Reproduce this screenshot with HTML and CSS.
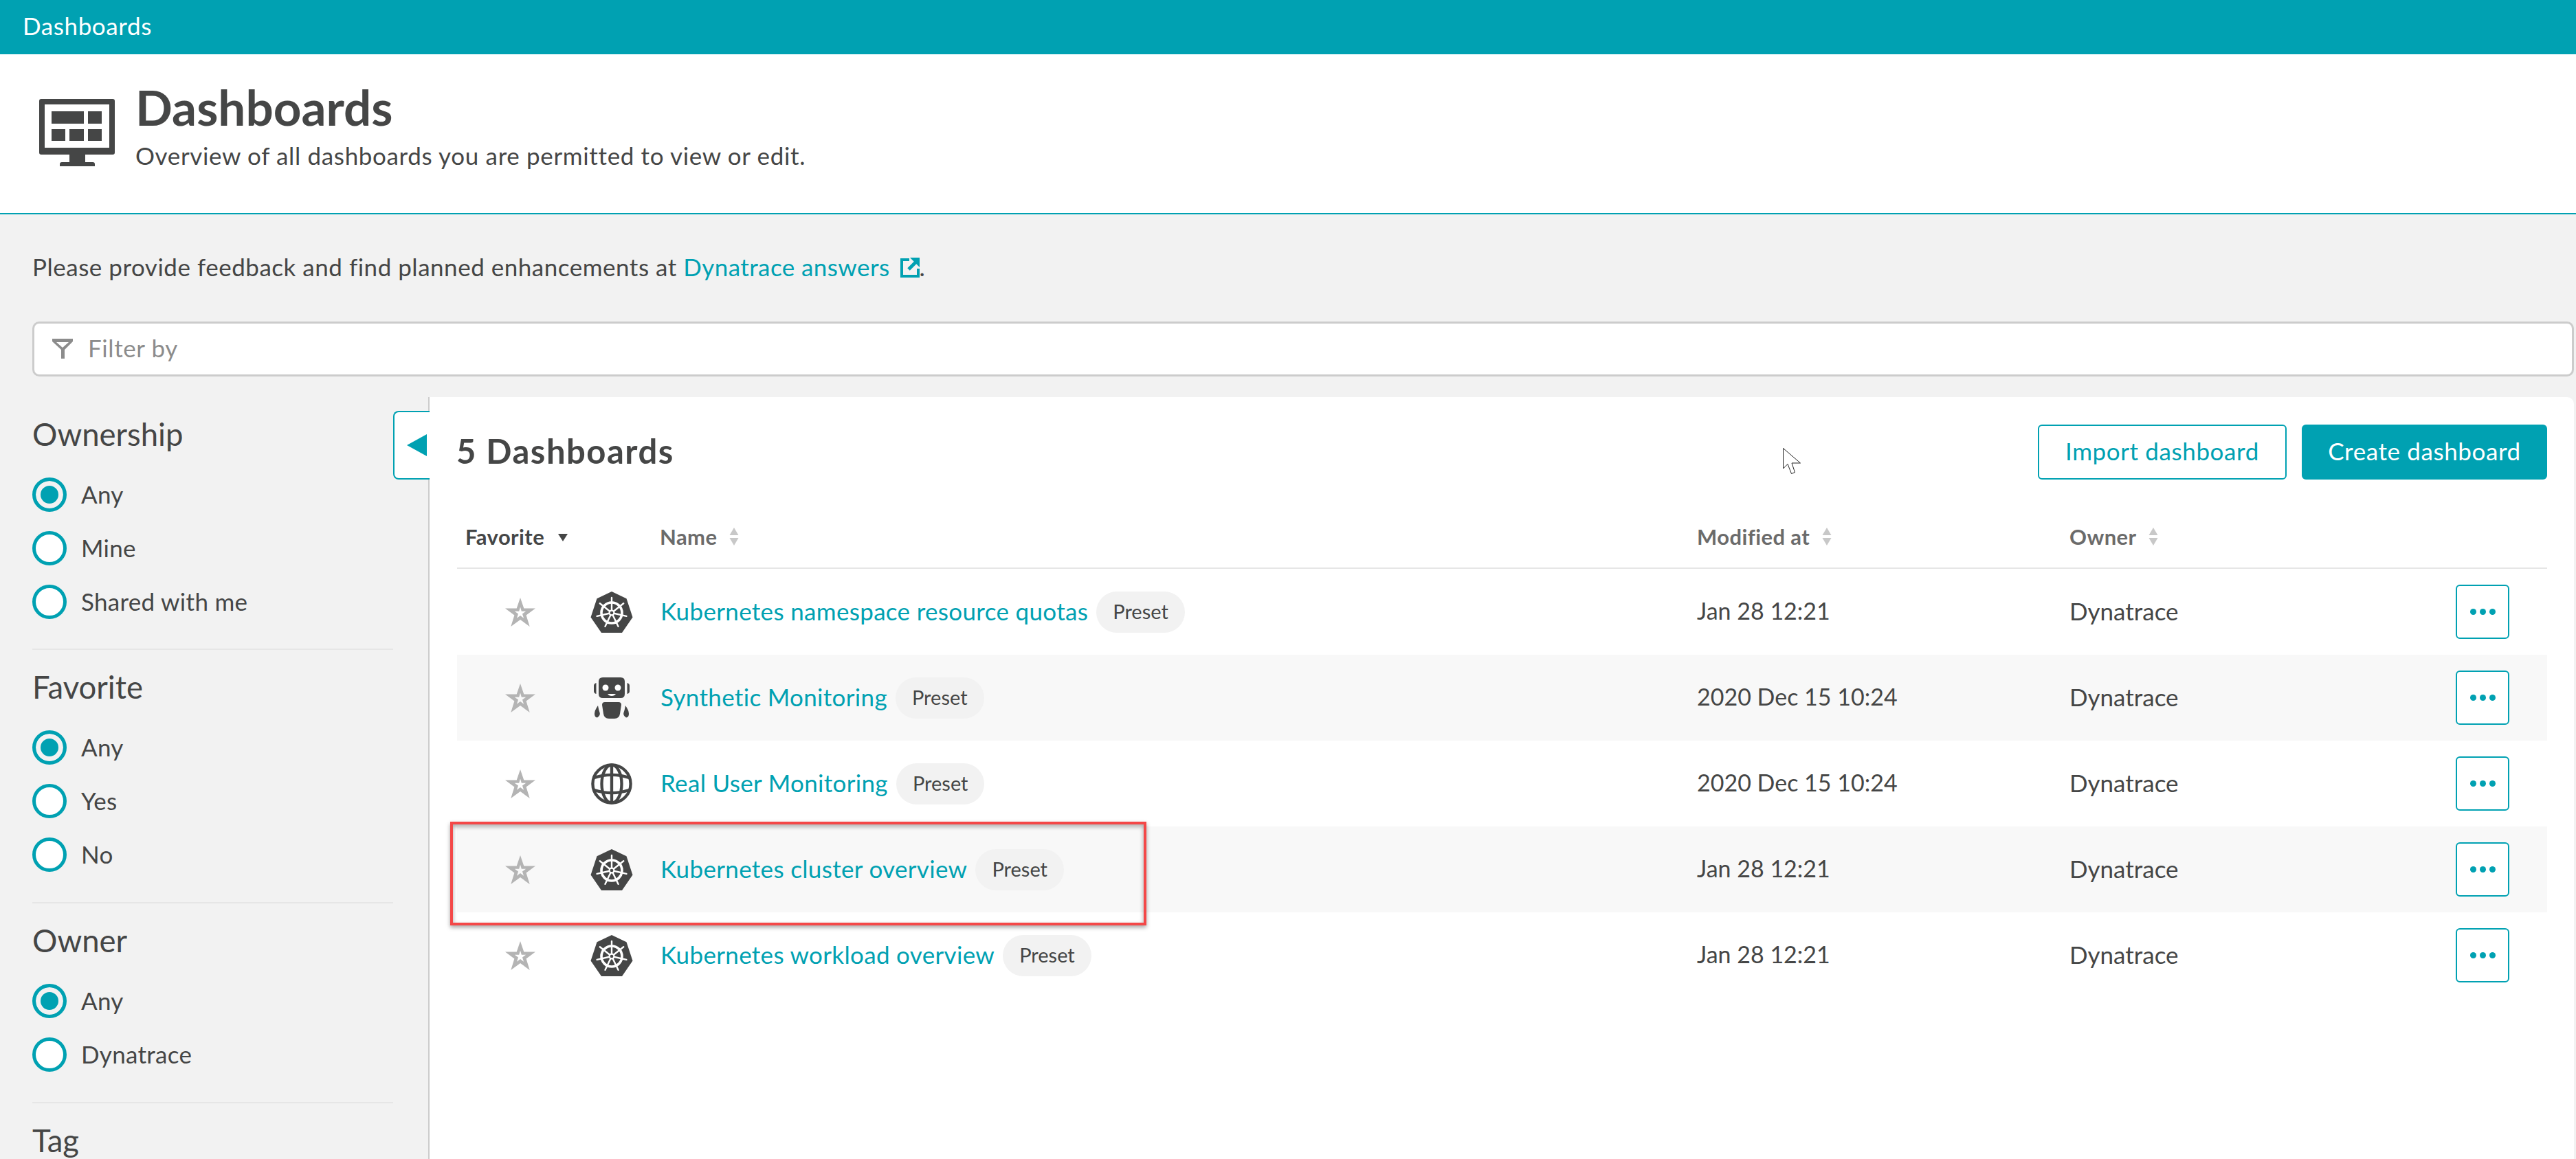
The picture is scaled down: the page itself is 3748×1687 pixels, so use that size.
FILE: index.html
```html
<!DOCTYPE html>
<html lang="en">
<head>
<meta charset="utf-8">
<title>Dashboards</title>
<link rel="stylesheet" href="styles.css">
</head>
<body>
<svg class="defs" width="0" height="0" aria-hidden="true">
  <defs>
    <symbol id="i-star" viewBox="0 0 44 42">
      <path fill-rule="evenodd" fill="#b4b4b4" d="M22 0 27.3 15.6H44L30.6 25.4 35.7 42 22 32 8.300 42 13.400 25.400 0 15.600H16.700ZM22 13.500 20.200 19.700H13.800L19 23.500 17 29.800 22 26 27 29.800 25 23.500 30.200 19.700H23.800Z"/>
    </symbol>
    <symbol id="i-kube" viewBox="0 0 62 60">
      <path fill="#454646" d="M31 0 52.500 10.300 61.500 37.600 46 60H16L.5 37.600 9.500 10.300Z"/>
      <g fill="none" stroke="#fff" stroke-linecap="round">
        <circle cx="31" cy="31" r="15" stroke-width="3.600"/>
        <path stroke-width="2.400" d="M31 31V9M31 31 48.200 17.300M31 31 52.400 35.900M31 31 40.500 50.800M31 31 21.500 50.800M31 31 9.600 35.900M31 31 13.800 17.300"/>
      </g>
      <circle cx="31" cy="31" r="4.500" fill="#fff"/>
      <circle cx="31" cy="31" r="2.300" fill="#454646"/>
    </symbol>
    <symbol id="i-robot" viewBox="0 0 52 60">
      <path fill="#454646" d="M13 0H39Q45 0 45 6V24Q45 30 39 30H13Q7 30 7 24V6Q7 0 13 0Z"/>
      <path fill="#454646" d="M0 12Q0 9 3.500 8V24Q0 23 0 20ZM52 12Q52 9 48.500 8V24Q52 23 52 20Z"/>
      <circle cx="17" cy="15" r="4.500" fill="#fff"/>
      <circle cx="35" cy="15" r="4.500" fill="#fff"/>
      <path fill="#fff" d="M20 24H32Q30 27 26 27T20 24Z"/>
      <path fill="#454646" d="M16 36H36Q40 36 40 40L38 53Q37 60 30 60H22Q15 60 14 53L12 40Q12 36 16 36Z"/>
      <path fill="#454646" d="M6 41Q7 47 8.500 51T5 58.500Q1 58 1 53T6 41ZM46 41Q45 47 43.500 51T47 58.500Q51 58 51 53T46 41Z"/>
    </symbol>
    <symbol id="i-globe" viewBox="0 0 62 62">
      <g fill="none" stroke="#454646" stroke-width="4.500">
        <circle cx="31" cy="31" r="28.500"/>
        <ellipse cx="31" cy="31" rx="15" ry="28.500"/>
        <path d="M31 2.500V59.500"/>
        <path d="M4 22Q31 13 58 22"/>
        <path d="M4 40Q31 49 58 40"/>
      </g>
    </symbol>
    <symbol id="i-sort" viewBox="0 0 14 26">
      <path fill="#c8c8c8" d="M7 0 13.500 11H.5ZM.5 15H13.500L7 26Z"/>
    </symbol>
  </defs>
</svg>

<div class="topbar">Dashboards</div>

<header class="pagehead">
  <svg class="pagehead-icon" viewBox="0 0 110 100" aria-hidden="true">
    <path fill="#454646" fill-rule="evenodd" d="M3 0H107Q110 0 110 3V78Q110 81 107 81H67V92H78Q81 92 81 95V98H30V95Q30 92 33 92H44V81H3Q0 81 0 78V3Q0 0 3 0ZM8 8V71H102V8Z"/>
    <path fill="#454646" d="M18 18H65V36H18ZM71 18H91V36H71ZM18 44H38V61H18ZM44 44H65V61H44ZM71 44H91V61H71Z"/>
  </svg>
  <div>
    <h1 class="pagehead-title">Dashboards</h1>
    <p class="pagehead-sub">Overview of all dashboards you are permitted to view or edit.</p>
  </div>
</header>

<main class="content">
  <p class="notice">Please provide feedback and find planned enhancements at <a class="link notice-link" href="#">Dynatrace answers</a><svg class="ext" viewBox="0 0 28 29" aria-hidden="true"><path fill="none" stroke="#00a1b2" stroke-width="4" d="M13 3H2V27H26V16"/><path fill="none" stroke="#00a1b2" stroke-width="5" d="M12 17 25 4"/><path fill="#00a1b2" d="M14 0H28V14Z"/></svg>.</p>

  <div class="filter">
    <svg class="filter-icon" viewBox="0 0 30 30" aria-hidden="true"><path fill="#8c8c8c" fill-rule="evenodd" d="M0 0H30V4L18 16V29H13V16L0 4ZM6 5 15 13 24 5Z"/></svg>
    <span class="filter-text">Filter by</span>
  </div>

  <div class="columns">
    <aside class="side">
      <section class="group group-first">
        <h2 class="group-title">Ownership</h2>
        <div class="radio on"><i></i>Any</div>
        <div class="radio"><i></i>Mine</div>
        <div class="radio"><i></i>Shared with me</div>
      </section>
      <section class="group">
        <h2 class="group-title">Favorite</h2>
        <div class="radio on"><i></i>Any</div>
        <div class="radio"><i></i>Yes</div>
        <div class="radio"><i></i>No</div>
      </section>
      <section class="group group-short">
        <h2 class="group-title">Owner</h2>
        <div class="radio on"><i></i>Any</div>
        <div class="radio"><i></i>Dynatrace</div>
      </section>
      <section class="group last">
        <h2 class="group-title">Tag</h2>
      </section>
    </aside>

    <section class="panel">
      <button class="collapse" aria-label="Collapse"><span class="tri"></span></button>
      <div class="panel-head">
        <h2 class="panel-title">5 Dashboards</h2>
        <div class="actions">
          <button class="btn btn-ghost">Import dashboard</button>
          <button class="btn btn-solid">Create dashboard</button>
        </div>
      </div>
      <div class="row row-head">
        <div class="th fav">Favorite <span class="caret"></span></div>
        <div></div>
        <div class="th name">Name <svg class="sort"><use href="#i-sort"/></svg></div>
        <div class="th">Modified at <svg class="sort"><use href="#i-sort"/></svg></div>
        <div class="th">Owner <svg class="sort"><use href="#i-sort"/></svg></div>
        <div></div>
      </div>

      <div class="row">
        <div class="cell-star"><svg class="star"><use href="#i-star"/></svg></div>
        <div class="cell-icon"><svg class="dash-icon"><use href="#i-kube"/></svg></div>
        <div class="cell-name"><a class="link" href="#">Kubernetes namespace resource quotas</a><span class="badge">Preset</span></div>
        <div class="date">Jan 28 12:21</div>
        <div class="owner">Dynatrace</div>
        <button class="more" aria-label="More"><span></span><span></span><span></span></button>
      </div>
      <div class="row alt">
        <div class="cell-star"><svg class="star"><use href="#i-star"/></svg></div>
        <div class="cell-icon"><svg class="dash-icon"><use href="#i-robot"/></svg></div>
        <div class="cell-name"><a class="link" href="#">Synthetic Monitoring</a><span class="badge">Preset</span></div>
        <div class="date">2020 Dec 15 10:24</div>
        <div class="owner">Dynatrace</div>
        <button class="more" aria-label="More"><span></span><span></span><span></span></button>
      </div>
      <div class="row">
        <div class="cell-star"><svg class="star"><use href="#i-star"/></svg></div>
        <div class="cell-icon"><svg class="dash-icon"><use href="#i-globe"/></svg></div>
        <div class="cell-name"><a class="link" href="#">Real User Monitoring</a><span class="badge">Preset</span></div>
        <div class="date">2020 Dec 15 10:24</div>
        <div class="owner">Dynatrace</div>
        <button class="more" aria-label="More"><span></span><span></span><span></span></button>
      </div>
      <div class="row alt marked">
        <div class="cell-star"><svg class="star"><use href="#i-star"/></svg></div>
        <div class="cell-icon"><svg class="dash-icon"><use href="#i-kube"/></svg></div>
        <div class="cell-name"><a class="link" href="#">Kubernetes cluster overview</a><span class="badge">Preset</span></div>
        <div class="date">Jan 28 12:21</div>
        <div class="owner">Dynatrace</div>
        <button class="more" aria-label="More"><span></span><span></span><span></span></button>
      </div>
      <div class="row">
        <div class="cell-star"><svg class="star"><use href="#i-star"/></svg></div>
        <div class="cell-icon"><svg class="dash-icon"><use href="#i-kube"/></svg></div>
        <div class="cell-name"><a class="link" href="#">Kubernetes workload overview</a><span class="badge">Preset</span></div>
        <div class="date">Jan 28 12:21</div>
        <div class="owner">Dynatrace</div>
        <button class="more" aria-label="More"><span></span><span></span><span></span></button>
      </div>

      <svg class="cursor" viewBox="0 0 26 38" aria-hidden="true"><path fill="#fff" stroke="#222" stroke-width="1" d="M.5.500V30L7 23.500 12.500 37.500 17.500 35.500 13 22H25.500Z"/></svg>
    </section>
  </div>
</main>
</body>
</html>
```

FILE: styles.css
```css
* { box-sizing: border-box; }

html, body {
  margin: 0;
  height: 1687px;
  overflow: hidden;
}

body {
  background: #f2f2f2;
  color: #454646;
  font-family: Lato, "Open Sans", sans-serif;
  font-size: 35px;
  letter-spacing: .6px;
}

.defs { position: absolute; }

.link { color: #00a1b2; text-decoration: none; letter-spacing: .33px; }
.notice-link { letter-spacing: .42px; }

.topbar {
  height: 79px;
  background: #00a1b2;
  color: #fff;
  padding-left: 33px;
  line-height: 75px;
}

.pagehead {
  height: 233px;
  background: #fff;
  border-bottom: 2px solid #00a1b2;
  display: flex;
  padding: 36px 0 0 57px;
  gap: 30px;
}

.pagehead-icon { width: 110px; height: 100px; margin-top: 29px; }

.pagehead-title {
  margin: 0;
  font-size: 71px;
  font-weight: 700;
  line-height: 82px;
  letter-spacing: 0;
}

.pagehead-sub { margin: 9px 0 0; line-height: 40px; letter-spacing: .65px; }

.content { padding: 0 3px 0 47px; }

.notice {
  margin: 0;
  height: 156px;
  padding-top: 56px;
  line-height: 40px;
  letter-spacing: .52px;
}

.ext { width: 28px; height: 29px; margin-left: 15px; vertical-align: -2px; }

.filter {
  height: 80px;
  background: #fff;
  border: 3px solid #ccc;
  border-radius: 10px;
  display: flex;
  align-items: center;
  padding-left: 26px;
  color: #8c8c8c;
}

.filter-icon { width: 30px; height: 30px; margin-right: 22px; }
.filter-text { padding-bottom: 4px; }

.columns {
  display: flex;
  margin-top: 30px;
  height: 1109px;
}

.side { width: 525px; flex: none; margin-right: 51px; }

.group {
  height: 369px;
  border-bottom: 2px solid #e6e6e6;
  padding-top: 27px;
}

.group-first { height: 368px; }
.group-short { height: 291px; }
.group.last { height: auto; border: 0; }

.group-title {
  margin: 0 0 22px;
  font-size: 45.5px;
  font-weight: 400;
  line-height: 54px;
  letter-spacing: 0;
}

.radio {
  display: flex;
  align-items: center;
  height: 78px;
  gap: 21px;
  letter-spacing: .3px;
  padding-bottom: 3px;
}

.radio i {
  width: 50px;
  height: 50px;
  margin-top: 3px;
  border: 5px solid #00a1b2;
  border-radius: 50%;
  background: #fff;
  flex: none;
}

.radio.on i {
  background: #00a1b2;
  box-shadow: inset 0 0 0 7px #f2f2f2;
}

.panel {
  position: relative;
  flex: 1;
  background: #fff;
  border-left: 2px solid #ccc;
  border-radius: 0 10px 0 0;
  padding: 0 39px 0 40px;
}

.collapse {
  position: absolute;
  left: -53px;
  top: 20px;
  width: 53px;
  height: 100px;
  padding: 0;
  background: #fff;
  border: 2px solid #00a1b2;
  border-right: 0;
  border-radius: 8px 0 0 8px;
}

.tri {
  display: block;
  margin-left: 18px;
  width: 0;
  height: 0;
  border-style: solid;
  border-width: 16px 29px 16px 0;
  border-color: transparent #00a1b2 transparent transparent;
}

.panel-head {
  height: 160px;
  display: flex;
  justify-content: space-between;
  padding-top: 38px;
}

.panel-title {
  margin: 0 0 0 -1px;
  font-size: 49px;
  font-weight: 700;
  line-height: 80px;
  letter-spacing: 1.500px;
}

.actions { display: flex; gap: 22px; margin-top: 2px; }

.btn {
  height: 80px;
  padding: 0 0 4px;
  border-radius: 6px;
  font: inherit;
  letter-spacing: .6px;
}

.btn-ghost {
  width: 362px;
  background: #fff;
  border: 2px solid #00a1b2;
  color: #00a1b2;
}

.btn-solid {
  width: 357px;
  background: #00a1b2;
  border: 2px solid #00a1b2;
  color: #fff;
}

.row {
  position: relative;
  display: grid;
  grid-template-columns: 184px 82px 1538px 542px 562px 78px;
  align-items: center;
  height: 125px;
  padding-right: 55px;
}

.row.alt { background: #f8f8f8; }

.row-head {
  height: 90px;
  border-bottom: 2px solid #e6e6e6;
  padding-bottom: 2px;
  font-size: 31px;
  letter-spacing: .4px;
}

.th { font-weight: 700; color: #6b6b6b; white-space: nowrap; }
.th.fav { color: #454646; padding-left: 12px; }
.th.name { padding-left: 29px; }

.caret {
  display: inline-block;
  margin-left: 12px;
  vertical-align: 5px;
  width: 0;
  height: 0;
  border-style: solid;
  border-width: 11px 7px 0;
  border-color: #454646 transparent transparent;
}

.sort { width: 14px; height: 26px; margin-left: 10px; vertical-align: -1px; }

.date { font-size: 34px; letter-spacing: 0; padding-bottom: 4px; }
.owner { letter-spacing: 0; padding-bottom: 4px; }

.cell-star { display: flex; justify-content: center; }
.star { width: 44px; height: 42px; }

.cell-icon { display: flex; justify-content: center; }
.dash-icon { width: 62px; height: 60px; }

.cell-name { display: flex; align-items: center; padding-left: 30px; }
.cell-name .link { padding-bottom: 4px; }

.badge {
  display: block;
  height: 60px;
  line-height: 58px;
  margin-left: 12px;
  padding: 0 24px;
  border-radius: 30px;
  background: #f2f2f2;
  font-size: 29px;
  letter-spacing: 0;
}

.more {
  width: 78px;
  height: 79px;
  padding: 0;
  background: #fff;
  border: 2px solid #00a1b2;
  border-radius: 6px;
  display: flex;
  align-items: center;
  justify-content: center;
  gap: 5px;
}

.more span {
  width: 9px;
  height: 9px;
  border-radius: 50%;
  background: #00a1b2;
}

.marked::after {
  content: "";
  position: absolute;
  left: -10px;
  top: -7px;
  width: 1005px;
  height: 143px;
  border: 4px solid #f44848;
  box-shadow: 0 3px 6px rgba(0, 0, 0, .35), inset 0 3px 6px rgba(0, 0, 0, .35);
}

.cursor {
  position: absolute;
  left: 1969px;
  top: 74px;
  width: 26px;
  height: 38px;
}
```
